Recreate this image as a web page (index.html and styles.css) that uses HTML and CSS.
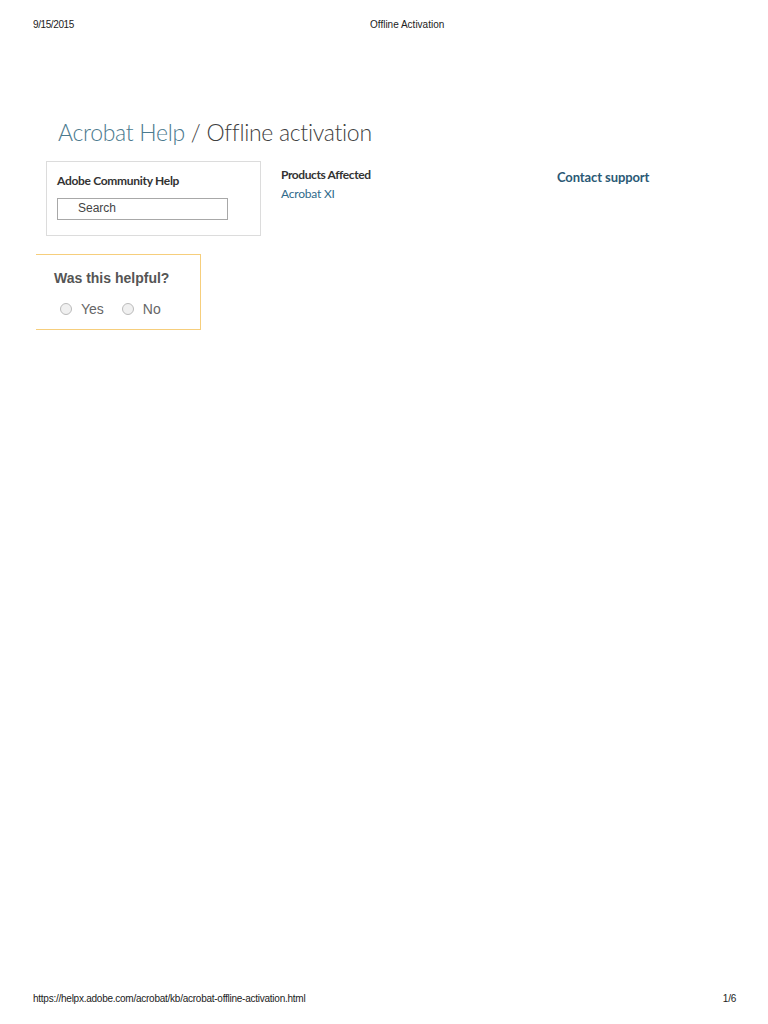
FILE: index.html
```html
<!DOCTYPE html>
<html>
<head>
  <title>Offline Activation</title>
  <link rel="stylesheet" href="styles.css">
</head>
<body>
  <div class="print-header">
    <span class="print-date">9/15/2015</span>
    <span class="print-title">Offline Activation</span>
  </div>

  <div class="page">
    <h1 class="page-title"><span class="crumb">Acrobat Help</span> / Offline activation</h1>

    <div class="info-row">
      <div class="community-box">
        <div class="community-label">Adobe Community Help</div>
        <div class="search-field">Search</div>
      </div>

      <div class="products">
        <div class="products-label">Products Affected</div>
        <a class="products-link" href="#">Acrobat XI</a>
      </div>

      <a class="contact-link" href="#">Contact support</a>
    </div>

    <div class="helpful-box">
      <div class="helpful-title">Was this helpful?</div>
      <div class="helpful-options">
        <label class="helpful-option"><span class="radio"></span>Yes</label>
        <label class="helpful-option"><span class="radio"></span>No</label>
      </div>
    </div>
  </div>

  <div class="print-footer">
    <span>https://helpx.adobe.com/acrobat/kb/acrobat-offline-activation.html</span>
    <span>1/6</span>
  </div>
</body>
</html>
```

FILE: styles.css
```css
body {
  margin: 0;
  width: 768px;
  height: 1024px;
  position: relative;
  background: #fff;
  font-family: "Liberation Sans", Arial, sans-serif;
}

/* print header / footer */
.print-header {
  display: flex;
  padding: 19px 0 0 33px;
  font-size: 10px;
  color: #222;
}

.print-date {
  width: 337px;
  letter-spacing: -0.4px;
}

.print-footer {
  position: absolute;
  left: 33px;
  right: 32px;
  bottom: 20px;
  display: flex;
  justify-content: space-between;
  font-size: 10px;
  color: #222;
  letter-spacing: -0.25px;
}

/* page content */
.page {
  padding: 0 0 0 36px;
}

.page-title {
  margin: 87px 0 0 22px;
  font-family: "Lato", sans-serif;
  font-weight: 300;
  font-size: 23px;
  letter-spacing: -0.3px;
  color: #3f3f3f;
  line-height: 30px;
}

.crumb {
  color: #4b7a8e;
}

.info-row {
  display: flex;
  align-items: flex-start;
  margin: 14px 0 0 10px;
}

.community-box {
  width: 203px;
  height: 62px;
  border: 1px solid #dcdcdc;
  padding: 11px 0 0 10px;
}

.community-label {
  font-family: "Lato", sans-serif;
  font-weight: bold;
  font-size: 12px;
  color: #333;
  letter-spacing: -0.3px;
}

.search-field {
  margin-top: 10px;
  width: 149px;
  height: 20px;
  border: 1px solid #a8a8a8;
  padding-left: 20px;
  font-size: 12px;
  line-height: 19px;
  color: #444;
}

.products {
  margin-left: 20px;
  width: 276px;
  padding-top: 6px;
}

.products-label {
  font-family: "Lato", sans-serif;
  font-weight: bold;
  font-size: 12px;
  color: #333;
  letter-spacing: -0.4px;
}

.products-link {
  display: block;
  margin-top: 4px;
  font-family: "Lato", sans-serif;
  font-size: 12px;
  color: #2f6a8a;
  text-decoration: none;
  letter-spacing: -0.2px;
}

.contact-link {
  padding-top: 8px;
  font-family: "Lato", sans-serif;
  font-weight: bold;
  font-size: 13px;
  color: #2b5975;
  text-decoration: none;
  letter-spacing: -0.1px;
}

.helpful-box {
  margin-top: 18px;
  width: 164px;
  height: 74px;
  border: 1px solid #f6ce7c;
  border-left: none;
}

.helpful-title {
  margin: 15px 0 0 18px;
  font-weight: bold;
  font-size: 14px;
  color: #555;
}

.helpful-options {
  display: flex;
  gap: 18px;
  margin: 15px 0 0 24px;
}

.helpful-option {
  display: flex;
  align-items: center;
  font-size: 14px;
  color: #666;
}

.radio {
  width: 10px;
  height: 10px;
  border: 1px solid #bbb;
  border-radius: 50%;
  background: #f0f0f0;
  margin-right: 9px;
}
```
